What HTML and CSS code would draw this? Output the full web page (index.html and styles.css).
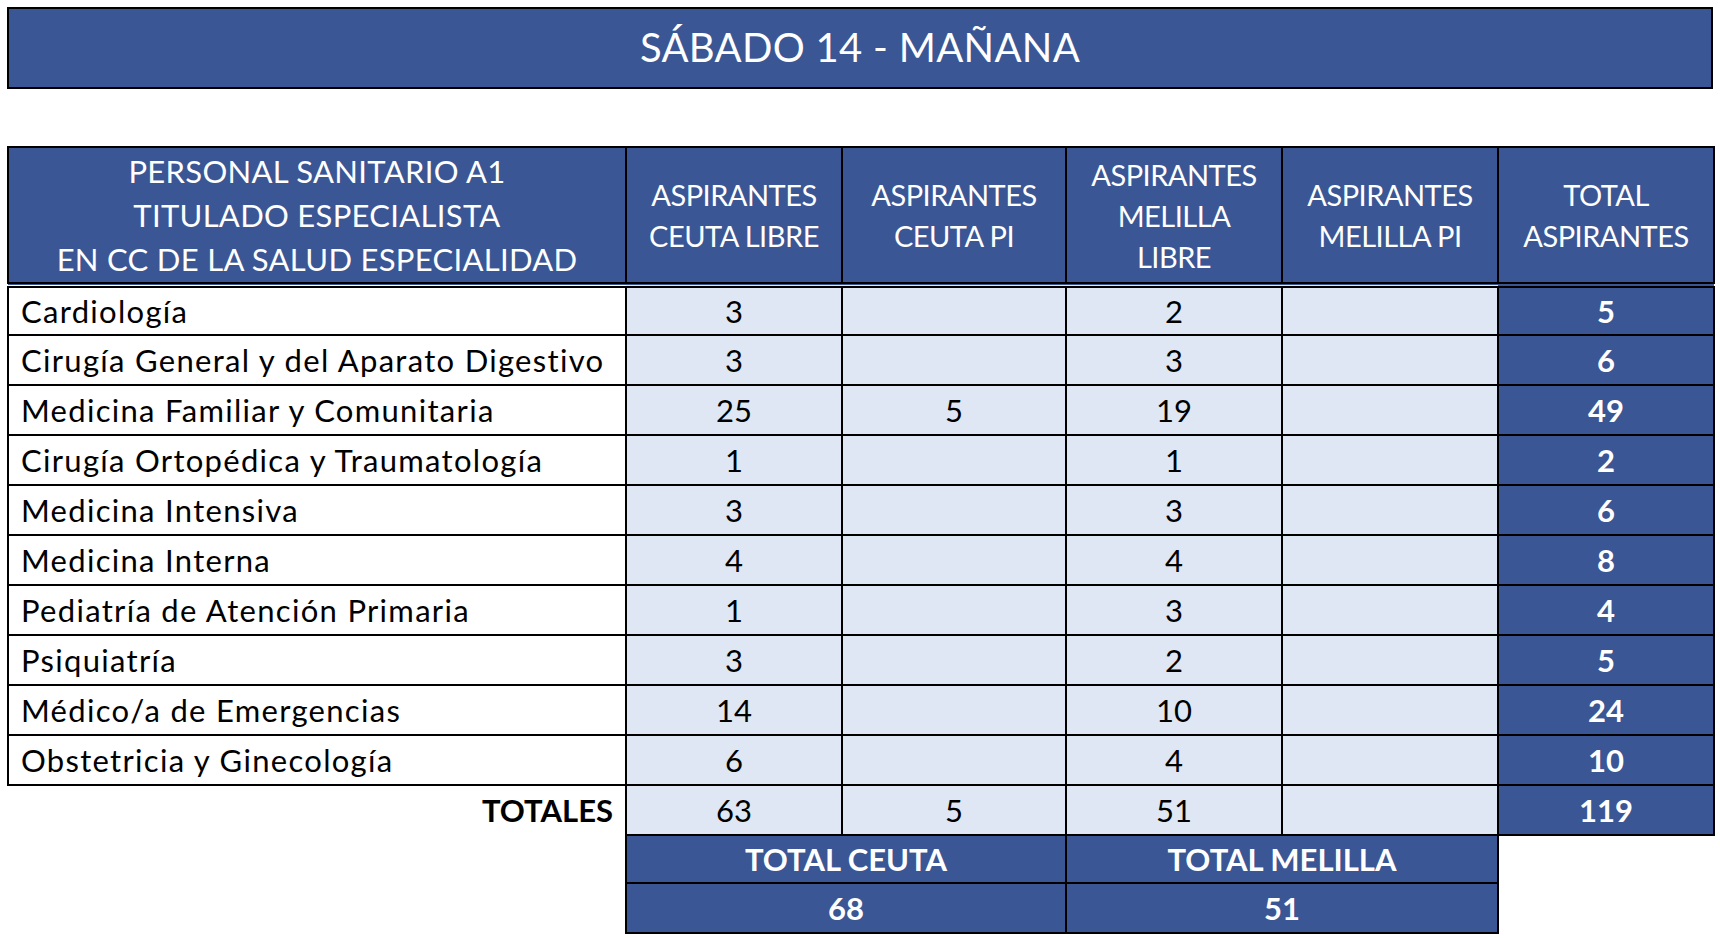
FILE: index.html
```html
<!DOCTYPE html>
<html lang="es">
<head>
<meta charset="utf-8">
<title>Sábado 14 - Mañana</title>
<link rel="stylesheet" href="styles.css">
</head>
<body>
<div class="page">
  <div class="title">SÁBADO 14 - MAÑANA</div>
  <table class="grid">
    <colgroup>
      <col class="c-name">
      <col class="c-num">
      <col class="c-num2">
      <col class="c-num">
      <col class="c-num">
      <col class="c-num">
    </colgroup>
    <thead>
      <tr class="head">
        <th class="h-main">PERSONAL SANITARIO A1<br>TITULADO ESPECIALISTA<br>EN CC DE LA SALUD ESPECIALIDAD</th>
        <th>ASPIRANTES<br>CEUTA LIBRE</th>
        <th>ASPIRANTES<br>CEUTA PI</th>
        <th>ASPIRANTES<br>MELILLA<br>LIBRE</th>
        <th>ASPIRANTES<br>MELILLA PI</th>
        <th>TOTAL<br>ASPIRANTES</th>
      </tr>
    </thead>
    <tbody>
      <tr><td class="name">Cardiología</td><td class="num">3</td><td class="num"></td><td class="num">2</td><td class="num"></td><td class="tot">5</td></tr>
      <tr><td class="name">Cirugía General y del Aparato Digestivo</td><td class="num">3</td><td class="num"></td><td class="num">3</td><td class="num"></td><td class="tot">6</td></tr>
      <tr><td class="name">Medicina Familiar y Comunitaria</td><td class="num">25</td><td class="num">5</td><td class="num">19</td><td class="num"></td><td class="tot">49</td></tr>
      <tr><td class="name">Cirugía Ortopédica y Traumatología</td><td class="num">1</td><td class="num"></td><td class="num">1</td><td class="num"></td><td class="tot">2</td></tr>
      <tr><td class="name">Medicina Intensiva</td><td class="num">3</td><td class="num"></td><td class="num">3</td><td class="num"></td><td class="tot">6</td></tr>
      <tr><td class="name">Medicina Interna</td><td class="num">4</td><td class="num"></td><td class="num">4</td><td class="num"></td><td class="tot">8</td></tr>
      <tr><td class="name">Pediatría de Atención Primaria</td><td class="num">1</td><td class="num"></td><td class="num">3</td><td class="num"></td><td class="tot">4</td></tr>
      <tr><td class="name">Psiquiatría</td><td class="num">3</td><td class="num"></td><td class="num">2</td><td class="num"></td><td class="tot">5</td></tr>
      <tr><td class="name">Médico/a de Emergencias</td><td class="num">14</td><td class="num"></td><td class="num">10</td><td class="num"></td><td class="tot">24</td></tr>
      <tr><td class="name">Obstetricia y Ginecología</td><td class="num">6</td><td class="num"></td><td class="num">4</td><td class="num"></td><td class="tot">10</td></tr>
      <tr class="totals"><td class="label">TOTALES</td><td class="num">63</td><td class="num">5</td><td class="num">51</td><td class="num"></td><td class="tot">119</td></tr>
      <tr class="sum-head"><td class="blank"></td><td class="sum" colspan="2">TOTAL CEUTA</td><td class="sum" colspan="2">TOTAL MELILLA</td><td class="blank"></td></tr>
      <tr class="sum-row"><td class="blank"></td><td class="sum" colspan="2">68</td><td class="sum" colspan="2">51</td><td class="blank"></td></tr>
    </tbody>
  </table>
</div>
</body>
</html>
```

FILE: styles.css
```css
html, body {
  margin: 0;
  padding: 0;
  background: #ffffff;
}

.page {
  padding: 7px 0 0 7px;
  width: 1706px;
  font-family: "Lato", "Liberation Sans", sans-serif;
  color: #000000;
}

.title {
  box-sizing: border-box;
  height: 82px;
  border: 2px solid #000000;
  background: #3a5694;
  color: #ffffff;
  font-size: 40px;
  line-height: 76px;
  text-align: center;
  letter-spacing: 0.3px;
}

.grid {
  margin-top: 57px;
  width: 1706px;
  table-layout: fixed;
  border-collapse: collapse;
}

.c-name { width: 618px; }
.c-num { width: 216px; }
.c-num2 { width: 224px; }

.grid th,
.grid td {
  border: 2px solid #000000;
  padding: 0;
}

.head th {
  height: 134px;
  background: #3a5694;
  color: #ffffff;
  font-weight: 400;
  font-size: 29px;
  line-height: 41px;
  text-align: center;
  vertical-align: middle;
  letter-spacing: -0.5px;
  border-bottom: 6px double #000000;
}

.head .h-main {
  font-size: 31px;
  line-height: 44px;
  letter-spacing: 0.3px;
  padding-top: 0;
}

.grid tbody tr {
  height: 50px;
}

.grid td {
  font-size: 31px;
  line-height: 31px;
  vertical-align: middle;
  padding-top: 0;
}

.name {
  background: #ffffff;
  text-align: left;
  padding-left: 12px !important;
  white-space: nowrap;
  letter-spacing: 1.3px;
}

.num {
  background: #dee7f3;
  text-align: center;
}

.tot {
  background: #3a5694;
  color: #ffffff;
  font-weight: 700;
  text-align: center;
}

.totals .label {
  border: none;
  border-top: 2px solid #000000;
  text-align: right;
  padding-right: 12px;
  font-weight: 700;
  letter-spacing: 0;
}

.sum-head {
  height: 48px !important;
}

.sum {
  background: #3a5694;
  color: #ffffff;
  font-weight: 700;
  text-align: center;
  letter-spacing: 0;
}

.grid td.blank {
  border: none;
  background: transparent;
}
```
